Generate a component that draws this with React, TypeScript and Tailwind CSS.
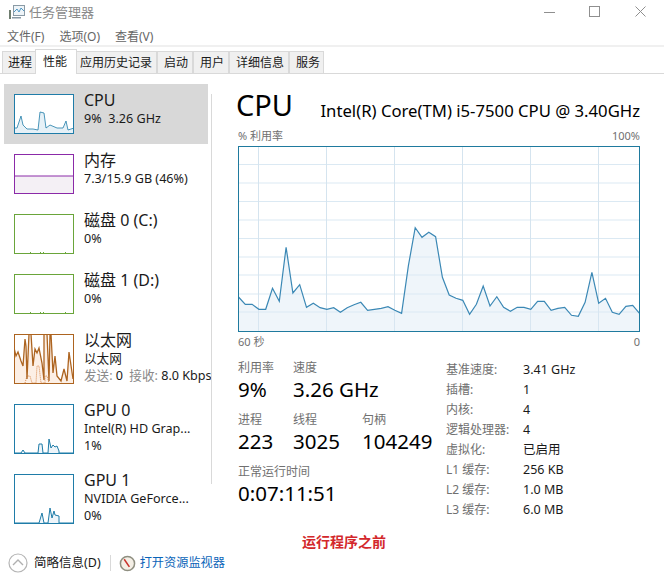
import React from "react";

const cpuY = [151, 158.3, 158.3, 163.3, 163.3, 142.3, 155.3, 101.3, 147, 138.7, 161.3, 157.3, 161.7, 163.3, 161.7, 166.3, 161.7, 158.7, 156.3, 164.3, 163.3, 162.3, 160.7, 164.3, 167.3, 119.7, 81.7, 91.3, 86.3, 90.7, 131.3, 149, 152.3, 154.3, 168.3, 158.3, 140, 160, 150.7, 161.3, 165.3, 161.3, 161.3, 163.3, 155.3, 155.3, 164.3, 162.3, 161.3, 169.3, 170.3, 156.3, 126.3, 157.3, 152.3, 166.3, 168.3, 160.3, 159.3, 167.3];

const cpuLine = cpuY.map((y, i) => `${(0.5 + (i * 401) / 59).toFixed(1)},${y}`).join(" ");

function CpuGraph() {
  const hLines = [18.5, 37, 55.5, 74, 92.5, 111, 129, 148, 166];
  const vLines = [20, 88, 156, 224, 292, 360];
  return (
    <svg width="402" height="186" viewBox="0 0 402 186" className="block">
      {hLines.map((y) => (
        <line key={y} x1="1" x2="401" y1={y} y2={y} stroke="#dbe9f3" />
      ))}
      {vLines.map((x) => (
        <line key={x} x1={x + 0.5} x2={x + 0.5} y1="1" y2="185" stroke="#d5e4ef" />
      ))}
      <polygon points={`0.5,185 ${cpuLine} 401.5,185`} fill="#dce9f3" fillOpacity="0.45" />
      <polyline points={cpuLine} fill="none" stroke="#3b88b5" strokeWidth="1.2" />
      <rect x="0.5" y="0.5" width="401" height="185" fill="none" stroke="#1f7a9e" />
    </svg>
  );
}

function Thumb({ w = 60, h = 40, color, fill, line, dotted, lineWidth = 1, extra }: { w?: number; h?: number; color: string; fill?: string; line?: string; dotted?: string; lineWidth?: number; extra?: React.ReactNode }) {
  return (
    <svg width={w} height={h} viewBox={`0 0 ${w} ${h}`} className="mt-[1px] block shrink-0 bg-white">
      {line && <polygon points={`0,${h} ${line} ${w},${h}`} fill={fill} />}
      {dotted && <polyline points={dotted} fill="none" stroke="#d98a4e" strokeDasharray="1 1" />}
      {line && <polyline points={line} fill="none" stroke={color} strokeWidth={lineWidth} />}
      {extra}
      <rect x="0.5" y="0.5" width={w - 1} height={h - 1} fill="none" stroke={color} />
    </svg>
  );
}

const diskTicks = (
  <>
    <rect x="16" y="38" width="1" height="1" fill="#6aa53a" />
    <rect x="26" y="38" width="1" height="1" fill="#6aa53a" />
    <rect x="29" y="38" width="1" height="1" fill="#6aa53a" />
    <rect x="51" y="38" width="1" height="1" fill="#6aa53a" />
  </>
);

const items = [
  {
    title: "CPU",
    lines: ["9%  3.26 GHz"],
    h: "h-[60px]",
    active: true,
    thumb: <Thumb color="#1f7ca8" fill="#e6f1f7" lineWidth={0.8} line="0,34 3,34 7,22 9,31 13,35 19,35 24,36 26,18 30,19 32,34 36,31 43,34 49,34 52,27 54,36 60,34" />,
  },
  {
    title: "内存",
    lines: ["7.3/15.9 GB (46%)"],
    h: "h-[60px]",
    thumb: <Thumb color="#8b2aa8" fill="#f4f0f5" line="0,22 60,22" />,
  },
  {
    title: "磁盘 0 (C:)",
    lines: ["0%"],
    h: "h-[60px]",
    thumb: <Thumb color="#6aa53a" extra={diskTicks} />,
  },
  {
    title: "磁盘 1 (D:)",
    lines: ["0%"],
    h: "h-[60px]",
    thumb: <Thumb color="#6aa53a" extra={diskTicks} />,
  },
  {
    title: "以太网",
    lines: ["以太网"],
    send: true,
    h: "h-[70px]",
    thumb: (
      <Thumb
        h={50}
        color="#ad6420"
        fill="#fcefe5"
        lineWidth={1.3}
        dotted="11,49 13,42 16,42 18,49 22,49 23,32 25,32 27,49 31,49 31,42 33,42 35,49"
        line="0,14 2,22 4,18 7,27 9,32 11,5 12,12 13,45 15,0 17,0 19,32 21,15 23,19 25,14 28,29 30,46 30,0 33,0 35,47 36,0 37,0 39,39 41,22 43,42 47,47 50,35 53,47 55,18 59,45"
      />
    ),
  },
  {
    title: "GPU 0",
    lines: ["Intel(R) HD Grap...", "1%"],
    h: "h-[70px]",
    thumb: <Thumb h={50} color="#1f7ca8" fill="#eef5fa" line="0,49 7,49 9,46 11,49 24,49 25,40 28,40 29,49 34,49 35,35 37,44 39,41 41,43 43,42 45,47 45,49 60,49" />,
  },
  {
    title: "GPU 1",
    lines: ["NVIDIA GeForce...", "0%"],
    h: "h-[70px]",
    thumb: <Thumb h={50} color="#1f7ca8" fill="#eef5fa" line="0,49 25,49 28,39 30,49 34,49 36,34 38,44 40,37 41,41 45,42 45,49 60,49" />,
  },
];

const tabs = [
  { label: "进程", box: "w-[34px] pl-[5px]" },
  { label: "性能", box: "w-[42px] pl-[7px]", active: true },
  { label: "应用历史记录", box: "w-[81px] pl-[3px]" },
  { label: "启动", box: "w-[36px] pl-[6px]" },
  { label: "用户", box: "w-[36px] pl-[6px]" },
  { label: "详细信息", box: "w-[60px] pl-[6px]" },
  { label: "服务", box: "w-[35px] pl-[6px]" },
];

const specs = [
  ["基准速度:", "3.41 GHz"],
  ["插槽:", "1"],
  ["内核:", "4"],
  ["逻辑处理器:", "4"],
  ["虚拟化:", "已启用"],
  ["L1 缓存:", "256 KB"],
  ["L2 缓存:", "1.0 MB"],
  ["L3 缓存:", "6.0 MB"],
];

function Stat({ label, value, className }: { label: string; value: string; className: string }) {
  return (
    <div className={className}>
      <div className="text-[12px] leading-[18px] text-[#707070]">{label}</div>
      <div className="-mt-px text-[20.5px] leading-[26px] text-black">{value}</div>
    </div>
  );
}

export default function App() {
  return (
    <div className="relative flex h-[588px] w-[664px] flex-col overflow-hidden bg-white font-['Noto_Sans','Noto_Sans_CJK_SC',sans-serif] text-[#1a1a1a]">
      {/* title bar */}
      <div className="flex h-[25px] shrink-0 items-center pb-[2px] pl-[8px]">
        <svg width="17" height="16" viewBox="0 0 17 16" className="shrink-0">
          <rect x="5.5" y="1.5" width="11" height="10" fill="#eef4f8" stroke="#8a9aa5" />
          <polyline points="6,8 9,5 11,8 13,4 16,7" fill="none" stroke="#4f97c4" />
          <rect x="1" y="6" width="2" height="9" fill="#6f7d6f" />
          <rect x="4" y="13" width="9" height="1.5" fill="#8a9aa5" />
        </svg>
        <span className="ml-[4px] text-[13px] leading-[18px] text-[#8a8a8a]">任务管理器</span>
        <div className="ml-auto flex items-center">
          <svg width="11" height="11" viewBox="0 0 11 11" className="mr-[34px]">
            <line x1="0" x2="11" y1="6.5" y2="6.5" stroke="#8f8f8f" />
          </svg>
          <svg width="11" height="11" viewBox="0 0 11 11" className="mr-[35px]">
            <rect x="0.5" y="0.5" width="10" height="10" fill="none" stroke="#8f8f8f" />
          </svg>
          <svg width="11" height="11" viewBox="0 0 11 11" className="mr-[18px]">
            <path d="M0.5 0.5 L10.5 10.5 M10.5 0.5 L0.5 10.5" fill="none" stroke="#8f8f8f" />
          </svg>
        </div>
      </div>

      {/* menu */}
      <div className="flex h-[20px] shrink-0 items-center gap-[15px] pl-[7px] pt-[3px] text-[12px] leading-[16px] text-[#666]">
        <span>文件(F)</span>
        <span>选项(O)</span>
        <span>查看(V)</span>
      </div>
      <div className="h-[2px] shrink-0 bg-[#f0f0f0]" />

      {/* tabs */}
      <div className="flex h-[27px] shrink-0 items-end border-b border-[#d9d9d9] pl-[2px]">
        {tabs.map((t) => (
          <div
            key={t.label}
            className={
              t.active
                ? `relative z-10 -mx-px -mb-px flex h-[25px] shrink-0 items-center border border-b-0 border-[#d9d9d9] bg-white text-[12px] leading-[16px] ${t.box}`
                : `flex h-[22px] shrink-0 items-center border border-b-0 border-[#d9d9d9] bg-[#f0f0f0] text-[12px] leading-[16px] ${t.box}`
            }
          >
            {t.label}
          </div>
        ))}
      </div>

      {/* body */}
      <div className="flex min-h-0 flex-1">
        <div className="flex w-[211px] shrink-0 flex-col overflow-hidden pl-[4px] pt-[10px]">
          {items.map((it) => (
            <div
              key={it.title}
              className={`flex w-[204px] shrink-0 items-start pl-[10px] pt-[9px] ${it.h} ${it.active ? "bg-[#d8d8d8]" : ""}`}
            >
              {it.thumb}
              <div className="ml-[10px] min-w-0 whitespace-nowrap">
                <div className="text-[16px] leading-[14px]">{it.title}</div>
                <div className="mt-[3px]">
                  {it.lines.map((l) => (
                    <div key={l} className="whitespace-pre text-[12.6px] leading-[17px]">
                      {l}
                    </div>
                  ))}
                  {it.send && (
                    <div className="text-[12.6px] leading-[17px]">
                      <span className="text-[#8a8a8a]">发送:</span> 0 <span className="ml-[3px] text-[#8a8a8a]">接收:</span> 8.0 Kbps
                    </div>
                  )}
                </div>
              </div>
            </div>
          ))}
        </div>
        <div className="mb-[52px] mt-[20px] w-px shrink-0 bg-[#d9d9d9]" />

        {/* cpu panel */}
        <div className="flex min-w-0 flex-1 flex-col pl-[26px] pr-[24px] pt-[12px]">
          <div className="flex h-[37px] items-end justify-between">
            <span className="-ml-[2px] text-[29px] leading-[37px] text-black">CPU</span>
            <span className="text-[16.7px] leading-[24px] text-black">Intel(R) Core(TM) i5-7500 CPU @ 3.40GHz</span>
          </div>
          <div className="mt-[3px] flex h-[20px] items-center justify-between text-[11px] leading-[14px] text-[#707070]">
            <span>% 利用率</span>
            <span>100%</span>
          </div>
          <CpuGraph />
          <div className="mt-[3px] flex justify-between text-[11px] leading-[14px] text-[#707070]">
            <span>60 秒</span>
            <span>0</span>
          </div>
          <div className="mt-[10px] flex">
            <div className="w-[208px] shrink-0">
              <div className="flex">
                <Stat label="利用率" value="9%" className="w-[55px]" />
                <Stat label="速度" value="3.26 GHz" className="w-[100px]" />
              </div>
              <div className="mt-[9px] flex">
                <Stat label="进程" value="223" className="w-[55px]" />
                <Stat label="线程" value="3025" className="w-[69px]" />
                <Stat label="句柄" value="104249" className="w-[80px]" />
              </div>
              <div className="mt-[9px]">
                <Stat label="正常运行时间" value="0:07:11:51" className="w-[150px]" />
              </div>
            </div>
            <div className="flex flex-col pt-px">
              {specs.map(([k, v]) => (
                <div key={k} className="flex h-[20px] items-center text-[12.5px] leading-[16px]">
                  <span className="w-[77px] text-[12px] text-[#707070]">{k}</span>
                  <span>{v}</span>
                </div>
              ))}
            </div>
          </div>
        </div>
      </div>

      {/* annotation over the window */}
      <div className="absolute left-[302px] top-[533px] text-[14px] font-bold leading-[18px] text-[#d3272b]">运行程序之前</div>

      {/* footer */}
      <div className="flex h-[52px] shrink-0 items-start pl-[8px] pt-[17px]">
        <svg width="20" height="20" viewBox="0 0 20 20" className="shrink-0">
          <circle cx="10" cy="10" r="9" fill="#fff" stroke="#b5b5b5" strokeWidth="1.2" />
          <polyline points="5,12 10,7 15,12" fill="none" stroke="#b0b0b0" strokeWidth="1.4" />
        </svg>
        <span className="ml-[6px] text-[12.5px] leading-[20px]">简略信息(D)</span>
        <div className="ml-[9px] mt-[2px] h-[16px] w-px bg-[#d9d9d9]" />
        <svg width="17" height="17" viewBox="0 0 18 18" className="ml-[8px] mt-[2px] shrink-0">
          <circle cx="9" cy="9" r="7.5" fill="#f4efe6" stroke="#8f8f80" strokeWidth="1.6" />
          <line x1="5.5" y1="4.5" x2="11" y2="12.5" stroke="#c8312b" strokeWidth="1.6" />
        </svg>
        <span className="ml-[4px] text-[12.2px] leading-[20px] text-[#0a64b8]">打开资源监视器</span>
      </div>
    </div>
  );
}
